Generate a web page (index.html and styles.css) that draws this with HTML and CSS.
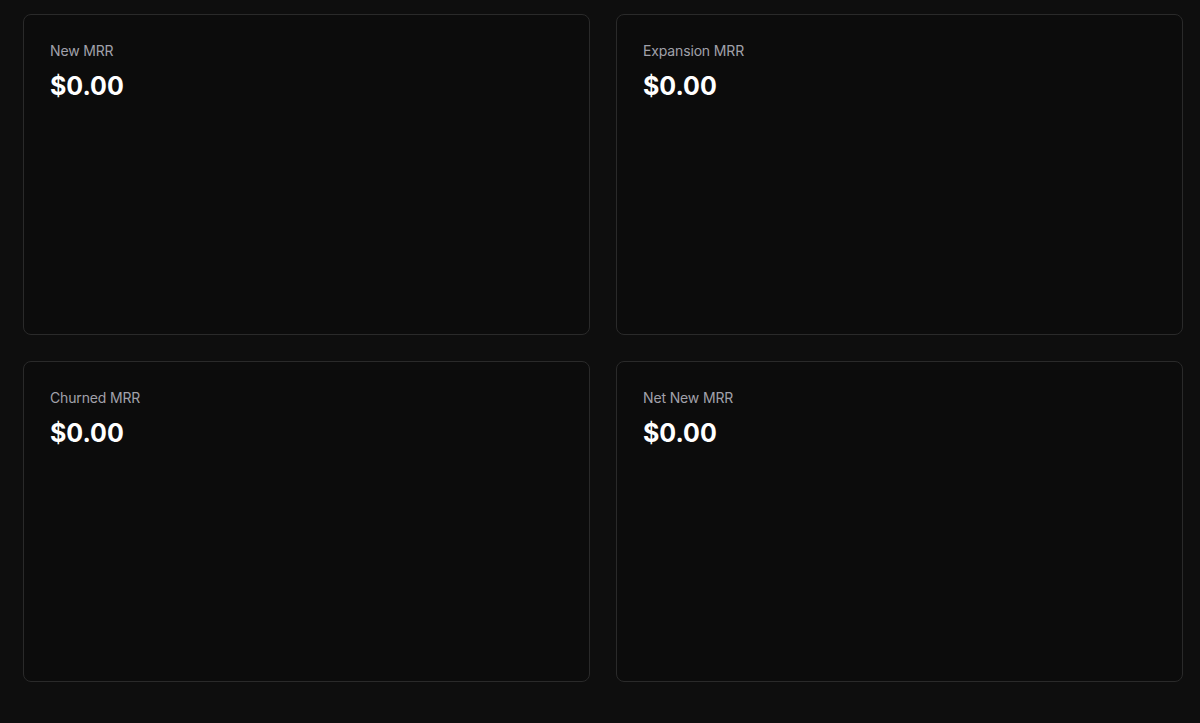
FILE: index.html
```html
<!DOCTYPE html>
<html lang="en">
<head>
<meta charset="utf-8">
<title>MRR</title>
<link rel="stylesheet" href="styles.css">
</head>
<body>
<main class="grid">
  <section class="card">
    <div class="label">New MRR</div>
    <div class="value">$0.00</div>
  </section>
  <section class="card">
    <div class="label">Expansion MRR</div>
    <div class="value">$0.00</div>
  </section>
  <section class="card">
    <div class="label">Churned MRR</div>
    <div class="value">$0.00</div>
  </section>
  <section class="card">
    <div class="label">Net New MRR</div>
    <div class="value">$0.00</div>
  </section>
</main>
</body>
</html>
```
FILE: styles.css
```css
html, body {
  margin: 0;
  padding: 0;
  background: #0e0e0e;
  font-family: Inter, "Noto Sans", sans-serif;
}
.grid {
  display: grid;
  grid-template-columns: 1fr 1fr;
  grid-auto-rows: 321px;
  gap: 26px;
  padding: 14px 17px 0 23px;
}
.card {
  border: 1px solid #2a2a2a;
  border-radius: 8px;
  background: #0c0c0c;
  padding: 26px 26px;
}
.label {
  font-size: 14px;
  line-height: 20px;
  letter-spacing: -0.15px;
  color: #a1a1aa;
}
.value {
  margin-top: 9px;
  font-size: 25px;
  line-height: 32px;
  font-weight: 700;
  color: #ffffff;
}
```
